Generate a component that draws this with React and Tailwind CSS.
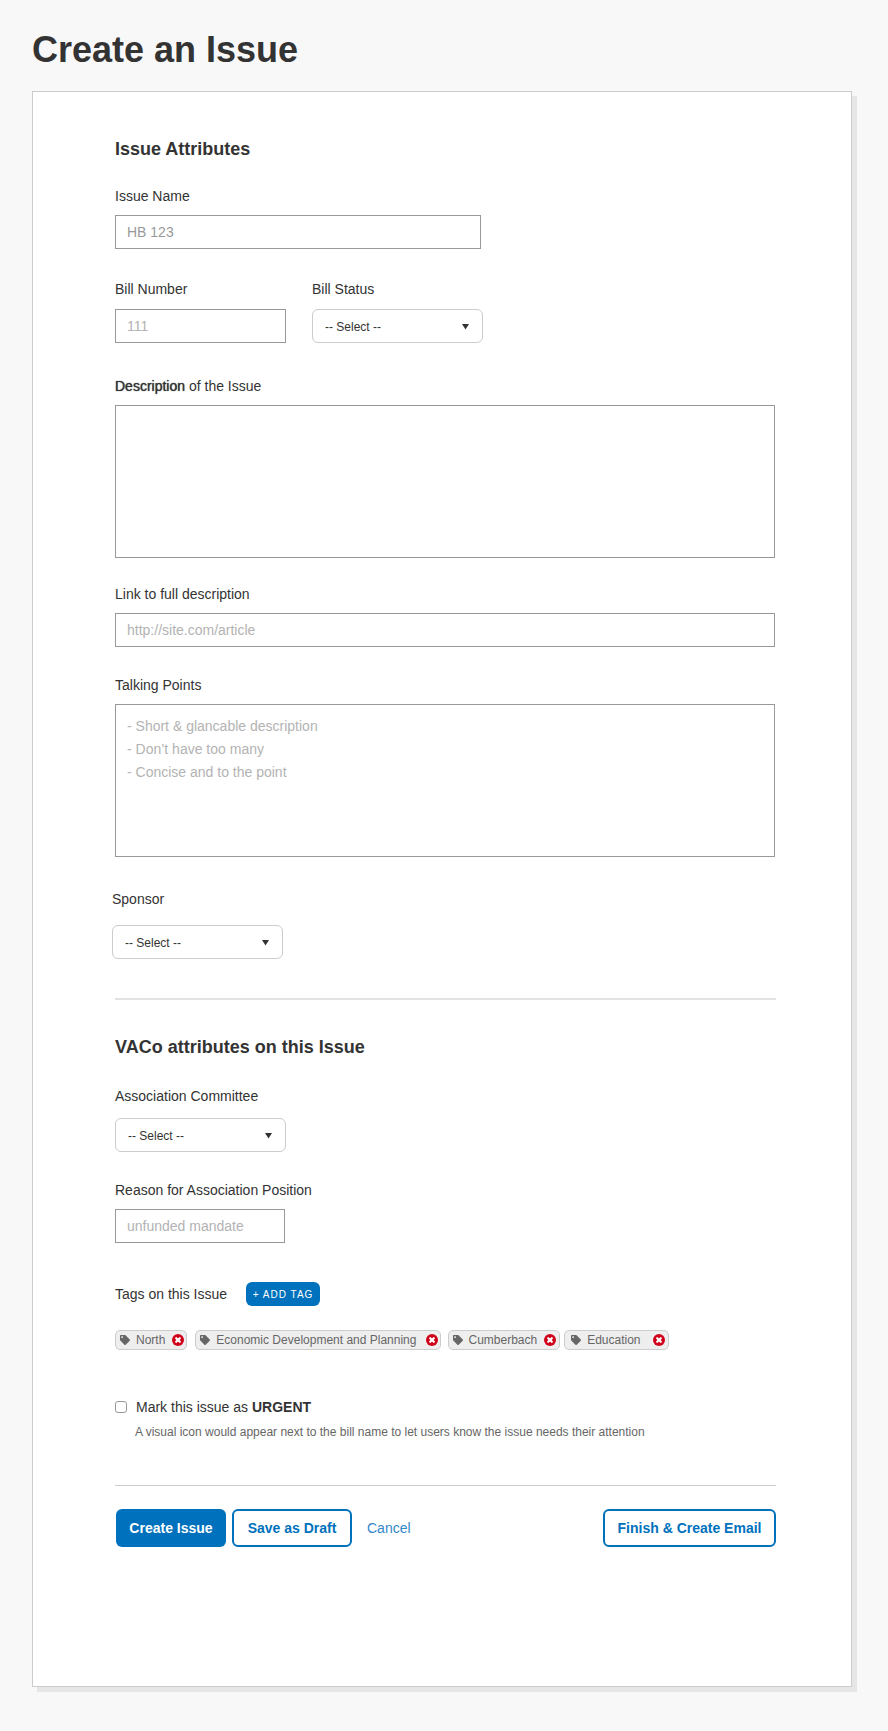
import { useState } from 'react';
import { FaTag } from 'react-icons/fa';

const inputClass = 'block h-[34px] border border-[#999] bg-white px-[11px] text-sm text-[#333]';
const textareaClass = 'block h-[153px] w-full resize-none border border-[#999] bg-white px-[11px] py-2.5 text-sm leading-[23px] text-[#333] placeholder:text-[#b3b3b3]';
const labelClass = 'block text-sm leading-5';
const outlineButton = 'h-[38px] rounded-md border-2 border-[#0071bc] bg-white text-sm font-bold text-[#0071bc]';

const initialTags = [
    { name: 'North', box: 'mr-2 pl-1 pr-0.5', icon: 'mr-1.5', text: 'mr-[7px]' },
    { name: 'Economic Development and Planning', box: 'mr-[7px] pl-1 pr-0.5', icon: 'mr-1.5', text: 'mr-2.5' },
    { name: 'Cumberbach', box: 'mr-1 pl-1 pr-[3px]', icon: 'mr-[5px]', text: 'mr-[7px]' },
    { name: 'Education', box: 'pl-1.5 pr-[3px]', icon: 'mr-1.5', text: 'mr-3' },
];

const SelectBox = ({ id }) => (
    <div className="relative w-[171px]">
        <select
            id={id}
            className="block h-[34px] w-full appearance-none rounded-md border border-[#ccc] bg-white pl-3 pr-8 pt-px text-xs text-[#333]"
        >
            <option>-- Select --</option>
        </select>
        <svg className="pointer-events-none absolute right-3.5 top-[15px]" width="7" height="6" viewBox="0 0 7 6">
            <path d="M0 0h7L3.5 5.5z" fill="#333" />
        </svg>
    </div>
);

const RemoveIcon = () => (
    <svg width="12" height="12" viewBox="0 0 12 12">
        <circle cx="6" cy="6" r="6" fill="#d0021b" />
        <path d="M4.2 4.2l3.6 3.6M7.8 4.2l-3.6 3.6" stroke="#fff" strokeWidth="2.2" strokeLinecap="round" />
    </svg>
);

const Tag = ({ tag, onRemove }) => (
    <li className={`flex h-5 items-center rounded-[5px] border border-[#ccc] bg-[#eee] text-xs text-[#666] ${tag.box}`}>
        <FaTag size={10} className={tag.icon} />
        <span className={tag.text}>{tag.name}</span>
        <button type="button" aria-label={`Remove ${tag.name}`} onClick={() => onRemove(tag.name)}>
            <RemoveIcon />
        </button>
    </li>
);

const App = () => {
    const [tags, setTags] = useState(initialTags);
    const [urgent, setUrgent] = useState(false);

    const removeTag = (name) => setTags(tags.filter((tag) => tag.name !== name));

    return (
        <div className="min-h-screen bg-[#f8f8f8] pb-[39px] pl-8 pr-9 pt-7 font-['Liberation_Sans',Arial,sans-serif] text-[#333]">
            <h1 className="text-4xl font-bold leading-[44px]">Create an Issue</h1>

            <form
                className="mt-[19px] border border-[#ccc] bg-white pb-[139px] pl-[79px] pr-[75px] pt-[45px] shadow-[5px_5px_0_#e6e6e6]"
                onSubmit={(e) => e.preventDefault()}
            >
                <section className="pl-[3px] pr-px">
                    <h2 className="text-lg font-bold leading-6">Issue Attributes</h2>

                    <div className="mt-[25px]">
                        <label htmlFor="issueName" className={labelClass}>Issue Name</label>
                        <input id="issueName" placeholder="HB 123" className={`mt-[9px] w-full max-w-[366px] placeholder:text-[#999] ${inputClass}`} />
                    </div>

                    <div className="mt-[30px] flex gap-[26px]">
                        <div>
                            <label htmlFor="billNumber" className={labelClass}>Bill Number</label>
                            <input id="billNumber" placeholder="111" className={`mt-2.5 w-[171px] placeholder:text-[#b3b3b3] ${inputClass}`} />
                        </div>
                        <div>
                            <label htmlFor="billStatus" className={`mb-2.5 ${labelClass}`}>Bill Status</label>
                            <SelectBox id="billStatus" />
                        </div>
                    </div>

                    <div className="mt-[33px]">
                        <label htmlFor="description" className={`mb-[9px] ${labelClass}`}>
                            <span className="[text-shadow:0_0_1px_#333]">Description</span> of the Issue
                        </label>
                        <textarea id="description" className={textareaClass} />
                    </div>

                    <div className="mt-[26px]">
                        <label htmlFor="link" className={labelClass}>Link to full description</label>
                        <input id="link" placeholder="http://site.com/article" className={`mt-[9px] w-full placeholder:text-[#b3b3b3] ${inputClass}`} />
                    </div>

                    <div className="mt-7">
                        <label htmlFor="talkingPoints" className={`mb-[9px] ${labelClass}`}>Talking Points</label>
                        <textarea
                            id="talkingPoints"
                            placeholder={'- Short & glancable description\n- Don’t have too many\n- Concise and to the point'}
                            className={textareaClass}
                        />
                    </div>
                </section>

                <section className="mt-8">
                    <label htmlFor="sponsor" className={`mb-4 ${labelClass}`}>Sponsor</label>
                    <SelectBox id="sponsor" />
                </section>

                <section className="pl-[3px]">
                    <hr className="mt-[39px] border-t-2 border-[#e2e2e2]" />
                    <h2 className="mt-[35px] text-lg font-bold leading-6">VACo attributes on this Issue</h2>

                    <div className="mt-[27px]">
                        <label htmlFor="committee" className={`mb-3 ${labelClass}`}>Association Committee</label>
                        <SelectBox id="committee" />
                    </div>

                    <div className="mt-7">
                        <label htmlFor="reason" className={labelClass}>Reason for Association Position</label>
                        <input id="reason" placeholder="unfunded mandate" className={`mt-[9px] w-[170px] placeholder:text-[#b3b3b3] ${inputClass}`} />
                    </div>

                    <div className="mt-[39px] flex items-center">
                        <h3 className="text-sm leading-5">Tags on this Issue</h3>
                        <button type="button" className="ml-[19px] h-6 w-[74px] rounded-md bg-[#0071bc] text-[10px] tracking-widest text-white">
                            + ADD TAG
                        </button>
                    </div>

                    <ul className="mt-6 flex flex-wrap">
                        {tags.map((tag) => (
                            <Tag key={tag.name} tag={tag} onRemove={removeTag} />
                        ))}
                    </ul>

                    <div className="mt-[47px] flex items-center">
                        <input
                            id="urgent"
                            type="checkbox"
                            checked={urgent}
                            onChange={(e) => setUrgent(e.target.checked)}
                            className="size-3 appearance-none rounded-[3px] border border-[#999] bg-white checked:bg-[#0071bc]"
                        />
                        <label htmlFor="urgent" className="ml-[9px] text-sm leading-5">
                            Mark this issue as <strong>URGENT</strong>
                        </label>
                    </div>
                    <p className="ml-5 mt-[7px] text-xs leading-4 text-[#666]">
                        A visual icon would appear next to the bill name to let users know the issue needs their attention
                    </p>

                    <hr className="mt-[45px] border-t border-[#ccc]" />

                    <div className="mt-[23px] flex items-center pl-px">
                        <button type="submit" className="h-[38px] w-[110px] rounded-md bg-[#0071bc] text-sm font-bold text-white">
                            Create Issue
                        </button>
                        <button type="button" className={`ml-1.5 w-[120px] ${outlineButton}`}>Save as Draft</button>
                        <a href="#" className="ml-[15px] text-sm text-[#3388c9]">Cancel</a>
                        <button type="button" className={`ml-auto w-[173px] ${outlineButton}`}>Finish &amp; Create Email</button>
                    </div>
                </section>
            </form>
        </div>
    );
};

export default App;
